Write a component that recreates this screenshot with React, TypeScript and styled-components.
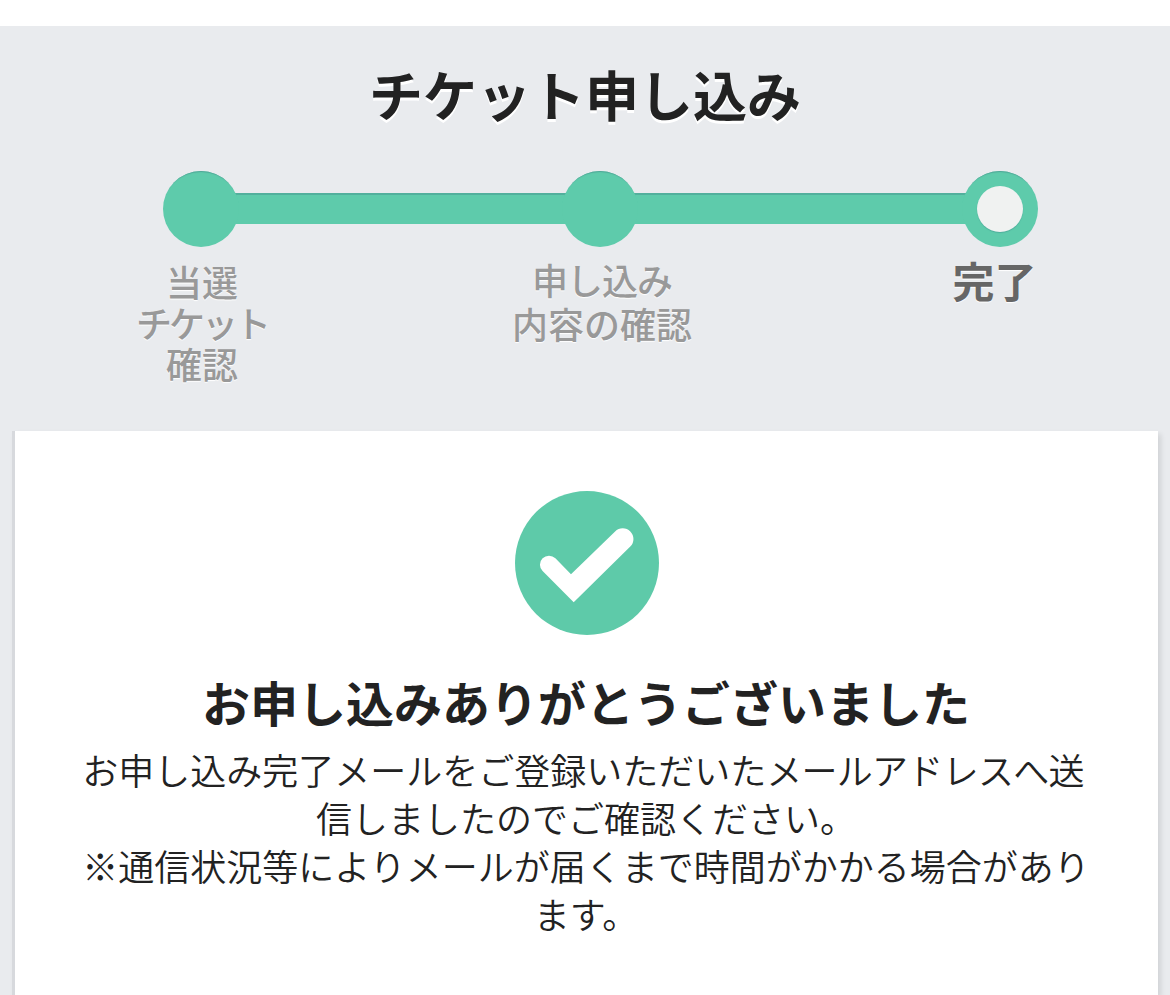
import { Fragment } from "react";
import styled, { createGlobalStyle } from "styled-components";

const steps = [
  {
    lines: [
      { text: "当選", spacing: 0 },
      { text: "チケット", spacing: -3 },
      { text: "確認", spacing: 0 },
    ],
    lineHeight: 41,
    offset: 14,
  },
  {
    lines: [
      { text: "申し込み", spacing: -1 },
      { text: "内容の確認", spacing: 0 },
    ],
    lineHeight: 44,
    offset: 10,
  },
  {
    lines: [{ text: "完了", spacing: 0 }],
    lineHeight: 48,
    offset: 9,
    current: true,
  },
];

const App = () => {
  return (
    <StPage lang="ja">
      <GlobalStyle />
      <StHeader>
        <StTitle>チケット申し込み</StTitle>
        <StTrack>
          {steps.map((step, i) => (
            <Fragment key={i}>
              {i > 0 && <StBar />}
              <StDot>{step.current && <StHole />}</StDot>
            </Fragment>
          ))}
        </StTrack>
        <StLabels>
          {steps.map((step, i) => (
            <StLabel
              key={i}
              $current={step.current}
              $lineHeight={step.lineHeight}
              $offset={step.offset}
            >
              {step.lines.map((line) => (
                <StLine key={line.text} $spacing={line.spacing}>
                  {line.text}
                </StLine>
              ))}
            </StLabel>
          ))}
        </StLabels>
      </StHeader>
      <StCard>
        <StCheck viewBox="0 0 144 144">
          <circle cx="72" cy="72" r="72" fill="#5ecaa9" />
          <path
            d="M27.6 80.1 A9 9 0 0 1 40.4 67.3 L56 83.3 L100.1 40.4 A10.7 10.7 0 0 1 115.3 55.6 L58.7 111.3 Z"
            fill="#fff"
          />
        </StCheck>
        <StHeading>お申し込みありがとうございました</StHeading>
        <StText>
          お申し込み完了メールをご登録いただいた
          <StTight>メールアドレスへ送</StTight>
          信しましたのでご確認ください。
        </StText>
        <StText>
          ※通信状況等によりメールが届くまで時間がかかる場合があります。
        </StText>
      </StCard>
    </StPage>
  );
};

const GlobalStyle = createGlobalStyle`
  * {
    box-sizing: border-box;
  }
  body {
    margin: 0;
    background: #fff;
    overflow: hidden;
  }
`;

const StPage = styled.div`
  display: flex;
  flex-direction: column;
  height: 995px;
  padding-top: 26px;
  overflow: hidden;
  color: #222;
  background: linear-gradient(#fff 26px, #e9ebee 26px);
  font-family: "Noto Sans CJK JP", "Liberation Sans", sans-serif;
`;

const StHeader = styled.header`
  flex: none;
  height: 405px;
  padding-top: 33px;
`;

const StTitle = styled.h1`
  margin: 0;
  font-size: 54px;
  line-height: 70px;
  font-weight: 700;
  text-align: center;
  text-shadow: 0 3px 0 #fff;
`;

const StTrack = styled.div`
  display: flex;
  align-items: center;
  margin-top: 42px;
  padding-left: 162.5px;
`;

const StDot = styled.div`
  display: flex;
  align-items: center;
  justify-content: center;
  flex: none;
  z-index: 1;
  width: 76px;
  height: 76px;
  border-radius: 50%;
  background: #5ecbab;
  box-shadow: inset 0 3px 1px -2px #4fa596;
`;

const StBar = styled.div`
  flex: none;
  width: 343.5px;
  height: 31px;
  margin: 0 -10px 2px;
  background: #5ecbab;
  border-top: 2px solid #52b09d;
`;

const StHole = styled.div`
  width: 46px;
  height: 46px;
  border-radius: 50%;
  background: #f0f2f1;
  box-shadow: 0 1px 1px #4fae9c;
`;

const StLabels = styled.div`
  display: grid;
  grid-template-columns: 300px 300px 285px;
  column-gap: 100px;
  padding-left: 52px;
`;

const StLabel = styled.div<{
  $current?: boolean;
  $lineHeight: number;
  $offset: number;
}>`
  display: flex;
  flex-direction: column;
  align-items: center;
  padding-top: ${({ $offset }) => $offset}px;
  color: ${({ $current }) => ($current ? "#666" : "#999")};
  font-size: ${({ $current }) => ($current ? 42 : 36)}px;
  font-weight: ${({ $current }) => ($current ? 700 : 500)};
  line-height: ${({ $lineHeight }) => $lineHeight}px;
  text-shadow: 0 1px 1px #fff;
`;

const StLine = styled.span<{ $spacing: number }>`
  letter-spacing: ${({ $spacing }) => $spacing}px;
`;

const StCard = styled.main`
  display: flex;
  flex: 1;
  flex-direction: column;
  align-items: center;
  margin: 0 12px;
  padding: 60px 60px 0 61px;
  background: #fff;
  border-left: 3px solid #d7d9dd;
  box-shadow: 3px 3px 5px rgba(0, 0, 0, 0.1);
`;

const StCheck = styled.svg`
  flex: none;
  width: 144px;
  height: 144px;
`;

const StHeading = styled.h2`
  margin: 34px 0 12px;
  padding-right: 2px;
  font-size: 48px;
  line-height: 64px;
  font-weight: 700;
`;

const StText = styled.p`
  width: 1014px;
  margin: 0;
  padding-right: 2px;
  font-size: 36px;
  font-weight: 350;
  line-height: 48px;
  text-align: center;
`;

const StTight = styled.span`
  margin-right: 6px;
  letter-spacing: -0.7px;
`;

export default App;
